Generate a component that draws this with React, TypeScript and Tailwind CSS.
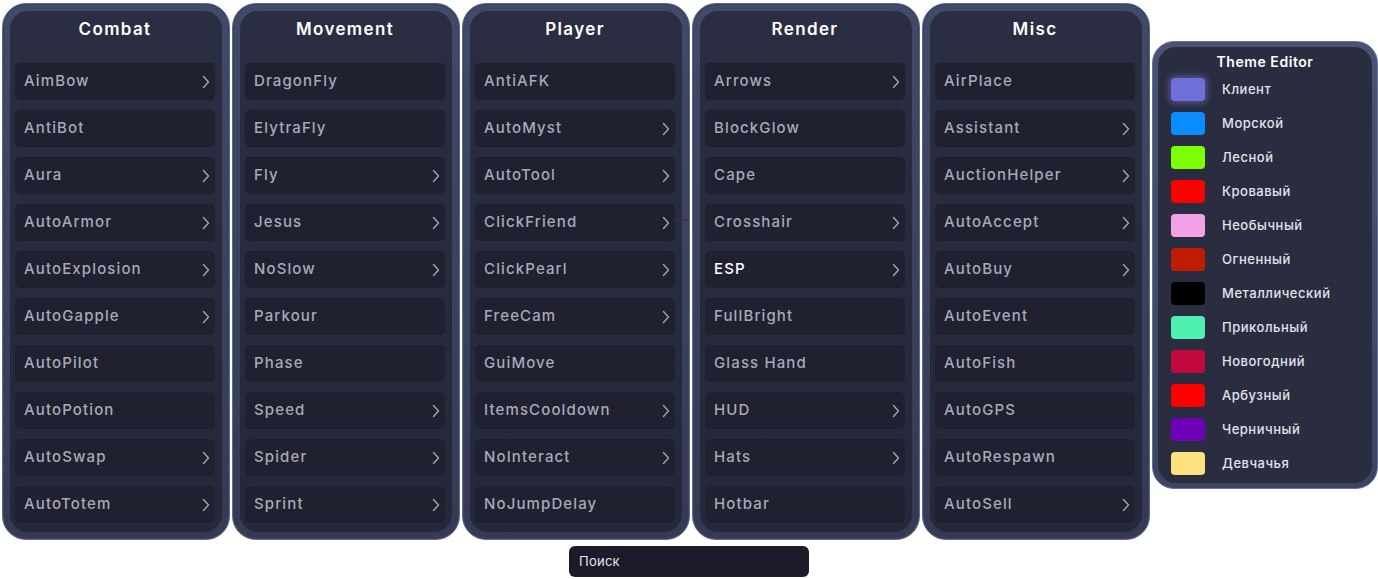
import React from 'react'

type Module = { name: string; sub?: boolean; on?: boolean }

const panels: { title: string; modules: Module[] }[] = [
  {
    title: 'Combat',
    modules: [
      { name: 'AimBow', sub: true },
      { name: 'AntiBot' },
      { name: 'Aura', sub: true },
      { name: 'AutoArmor', sub: true },
      { name: 'AutoExplosion', sub: true },
      { name: 'AutoGapple', sub: true },
      { name: 'AutoPilot' },
      { name: 'AutoPotion' },
      { name: 'AutoSwap', sub: true },
      { name: 'AutoTotem', sub: true },
    ],
  },
  {
    title: 'Movement',
    modules: [
      { name: 'DragonFly' },
      { name: 'ElytraFly' },
      { name: 'Fly', sub: true },
      { name: 'Jesus', sub: true },
      { name: 'NoSlow', sub: true },
      { name: 'Parkour' },
      { name: 'Phase' },
      { name: 'Speed', sub: true },
      { name: 'Spider', sub: true },
      { name: 'Sprint', sub: true },
    ],
  },
  {
    title: 'Player',
    modules: [
      { name: 'AntiAFK' },
      { name: 'AutoMyst', sub: true },
      { name: 'AutoTool', sub: true },
      { name: 'ClickFriend', sub: true },
      { name: 'ClickPearl', sub: true },
      { name: 'FreeCam', sub: true },
      { name: 'GuiMove' },
      { name: 'ItemsCooldown', sub: true },
      { name: 'NoInteract', sub: true },
      { name: 'NoJumpDelay' },
    ],
  },
  {
    title: 'Render',
    modules: [
      { name: 'Arrows', sub: true },
      { name: 'BlockGlow' },
      { name: 'Cape' },
      { name: 'Crosshair', sub: true },
      { name: 'ESP', sub: true, on: true },
      { name: 'FullBright' },
      { name: 'Glass Hand' },
      { name: 'HUD', sub: true },
      { name: 'Hats', sub: true },
      { name: 'Hotbar' },
    ],
  },
  {
    title: 'Misc',
    modules: [
      { name: 'AirPlace' },
      { name: 'Assistant', sub: true },
      { name: 'AuctionHelper', sub: true },
      { name: 'AutoAccept', sub: true },
      { name: 'AutoBuy', sub: true },
      { name: 'AutoEvent' },
      { name: 'AutoFish' },
      { name: 'AutoGPS' },
      { name: 'AutoRespawn' },
      { name: 'AutoSell', sub: true },
    ],
  },
]

const themes = [
  { name: 'Клиент', color: 'bg-[#6e70d8]', glow: true },
  { name: 'Морской', color: 'bg-[#0a8cff]' },
  { name: 'Лесной', color: 'bg-[#7cff00]' },
  { name: 'Кровавый', color: 'bg-[#ff0000]' },
  { name: 'Необычный', color: 'bg-[#f4a2e8]' },
  { name: 'Огненный', color: 'bg-[#c01a00]' },
  { name: 'Металлический', color: 'bg-[#000000]' },
  { name: 'Прикольный', color: 'bg-[#50f0b0]' },
  { name: 'Новогодний', color: 'bg-[#c0083c]' },
  { name: 'Арбузный', color: 'bg-[#ff0000]' },
  { name: 'Черничный', color: 'bg-[#6e00b8]' },
  { name: 'Девчачья', color: 'bg-[#ffe07c]' },
]

const font = { fontFamily: 'Inter, "Noto Sans", sans-serif' }

function Chevron() {
  return (
    <svg width="8" height="14" viewBox="0 0 8 14" fill="none">
      <polyline points="1.5,1.5 6.5,7 1.5,12.5" stroke="#a3a5b3" strokeWidth="1.4" strokeLinecap="round" strokeLinejoin="round" />
    </svg>
  )
}

function Panel({ title, modules }: { title: string; modules: Module[] }) {
  return (
    <div className="w-[228px] h-[537px] rounded-[24px] p-[7px] bg-gradient-to-b from-[#414a68] to-[#343a52] border border-[#5d6994] shadow-[inset_0_0_0_1px_#3a4260]">
      <div className="h-full rounded-[18px] bg-gradient-to-b from-[#2b2e42] to-[#25273a] pl-[4px] pr-[6px] flex flex-col">
        <div className="h-[37px] flex items-center justify-center text-[17px] font-semibold text-white tracking-[0.08em]">
          {title}
        </div>
        <div className="pt-[14px] flex flex-col gap-[8px]">
          {modules.map((m) => (
            <div
              key={m.name}
              className="h-[39px] rounded-[7px] bg-[#1f2030] border border-[#282a3b] flex items-center justify-between pl-[9px] pr-[5px]"
            >
              <span className={`text-[15px] font-medium tracking-[0.075em] ${m.on ? 'text-white' : 'text-[#a8aab8]'}`}>
                {m.name}
              </span>
              {m.sub && <Chevron />}
            </div>
          ))}
        </div>
      </div>
    </div>
  )
}

export default function App() {
  return (
    <div className="w-[1378px] h-[579px] bg-white overflow-hidden relative" style={font}>
      <div className="flex items-start pl-[2px] pt-[3px] gap-[2px]">
        {panels.map((p) => (
          <Panel key={p.title} title={p.title} modules={p.modules} />
        ))}
        <div className="mt-[38px] w-[226px] h-[448px] rounded-[22px] p-[5px] bg-gradient-to-b from-[#4a5373] to-[#3c4462] border border-[#66719a]">
          <div className="h-full rounded-[18px] bg-[#2a2d40] flex flex-col">
            <div className="h-[26px] pt-[3px] flex items-center justify-center text-[14px] font-semibold text-white tracking-[0.04em]">
              Theme Editor
            </div>
            <div className="pt-[5px] pl-[13px] flex flex-col gap-[11px]">
              {themes.map((t) => (
                <div key={t.name} className="flex items-center h-[23px]">
                  <div
                    className={`w-[34px] h-[23px] rounded-[4px] ${t.color} ${t.glow ? 'shadow-[0_0_6px_2px_rgba(130,130,240,0.5)]' : ''}`}
                  />
                  <span className="ml-[17px] text-[13px] font-medium text-[#e2e3ea] tracking-[0.04em]">{t.name}</span>
                </div>
              ))}
            </div>
          </div>
        </div>
      </div>
      <div className="flex justify-center mt-[6px]">
        <div className="w-[240px] h-[31px] rounded-[6px] bg-[#1b1b29] flex items-center pl-[10px] text-[13px] text-[#e6e6ee] tracking-[0.02em]">
          Поиск
        </div>
      </div>
      {/* cursor crosshair */}
      <div className="absolute left-[673px] top-[220px] w-[15px] h-[1px] bg-[#333]" />
      <div className="absolute left-[680px] top-[213px] w-[1px] h-[15px] bg-[#333]" />
    </div>
  )
}
